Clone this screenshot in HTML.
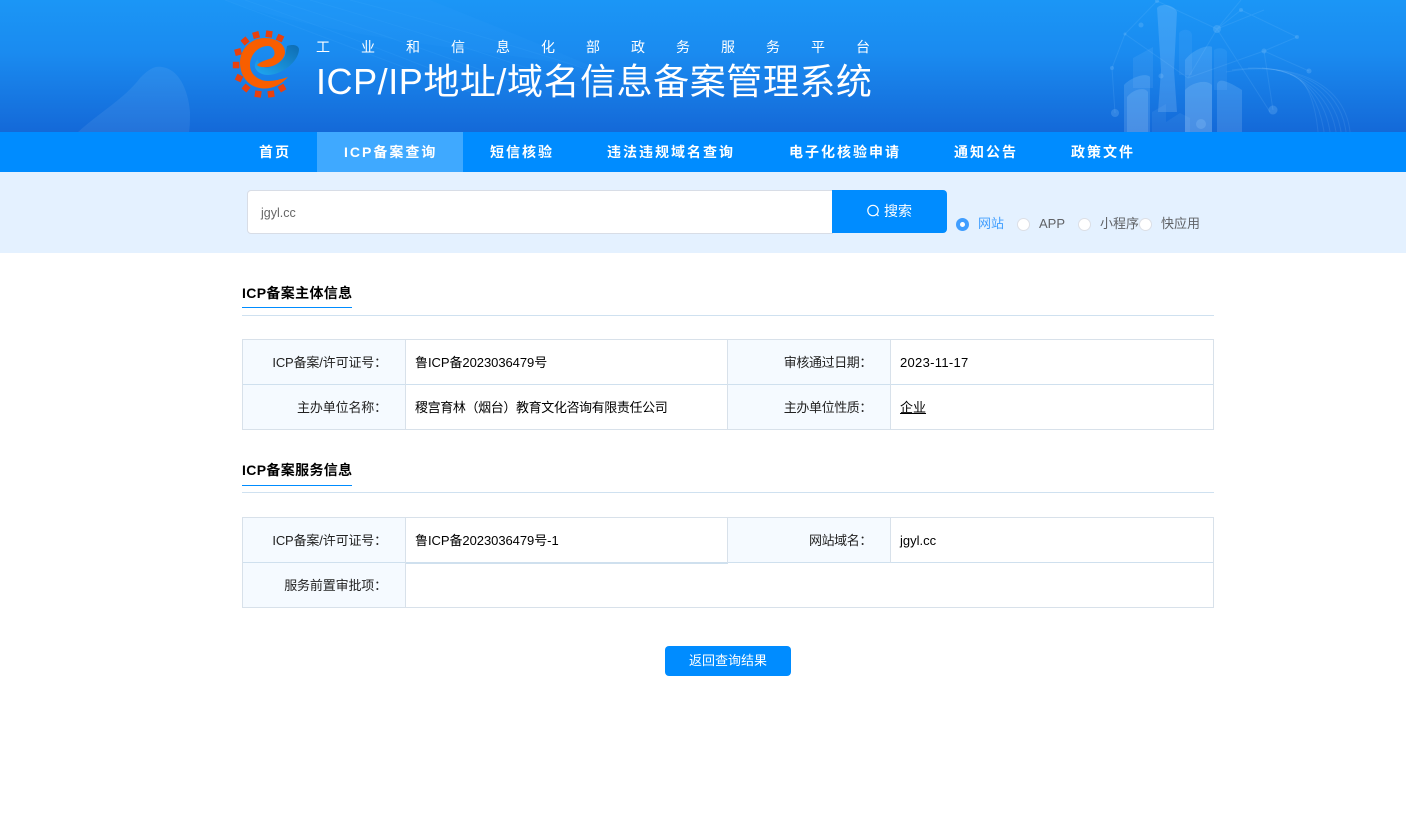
<!DOCTYPE html>
<html lang="zh-CN">
<head>
<meta charset="utf-8">
<title>ICP/IP地址/域名信息备案管理系统</title>
<style>
html,body{margin:0;padding:0;background:#fff;width:1406px;height:838px;overflow:hidden}
body{position:relative;font-family:"Liberation Sans","Noto Sans CJK SC",sans-serif;font-size:13px;color:#000}
.a{position:absolute;white-space:nowrap}
#hd{position:absolute;left:0;top:0;width:1406px;height:132px;background:linear-gradient(180deg,#1b96f6 0%,#1a8bf0 40%,#1469d8 100%);overflow:hidden}
#nav{position:absolute;left:0;top:132px;width:1406px;height:40px;background:#008cff}
#nav span{position:absolute;top:0;line-height:40px;color:#fff;font-weight:700;font-size:14px;letter-spacing:2px;white-space:nowrap}
#act{position:absolute;left:317px;top:0;width:146px;height:40px;background:#3fa9ff}
#sb{position:absolute;left:0;top:172px;width:1406px;height:81px;background:#e4f1ff}
.r{position:absolute;top:218px;width:11px;height:11px;border:1px solid #dcdfe6;border-radius:50%;background:#fff}
.rl{position:absolute;top:214px;line-height:20px;font-size:13px;color:#606266;white-space:nowrap}
.l{position:absolute;background:#d8e1ea}
.th{position:absolute;background:#f5faff}
.c{position:absolute;line-height:20px;font-size:13px;color:#000;white-space:nowrap}
.k{text-align:right;width:144px;color:#222;letter-spacing:-.15px}
.st{position:absolute;left:242px;width:110px;font-size:14px;font-weight:700;line-height:20px;color:#000;white-space:nowrap;letter-spacing:.35px}
</style>
</head>
<body>
<div id="hd">
<svg width="1406" height="132" viewBox="0 0 1406 132" style="position:absolute;left:0;top:0">
<path d="M78 132C100 112 125 98 140 78C150 68 155 66 162 67C178 69 188 88 190 112C190 120 190 126 189 132Z" fill="#fff" fill-opacity=".07"/>
<g fill="none" stroke="#4fb4ff" stroke-opacity=".14">
<path d="M225 0C300 28 380 58 470 92"/><path d="M245 0C320 26 400 56 500 96"/><path d="M275 0C350 24 430 50 540 92"/><path d="M310 0C380 20 470 48 580 86"/><path d="M350 0C420 18 510 44 620 80"/>
</g>
<path d="M225 0L430 0C480 20 540 44 600 70C500 50 330 40 225 0Z" fill="#38a9ff" fill-opacity=".1"/>
<g stroke="#8fcbff" stroke-opacity=".14" fill="none">
<path d="M1157 1L1125 34L1112 68L1115 113M1157 1L1217 29L1264 10M1217 29L1241 10M1217 29L1270 112M1241 10L1297 37L1264 51L1309 71M1125 34L1188 78L1264 51M1217 29L1188 78M1217 29L1241 0M1264 51L1273 110"/>
</g>
<g fill="#a6d6ff" fill-opacity=".2">
<circle cx="1141" cy="25" r="2.500"/><circle cx="1125" cy="34" r="1.500"/><circle cx="1112" cy="68" r="2"/><circle cx="1115" cy="113" r="4"/><circle cx="1217" cy="29" r="4"/><circle cx="1241" cy="10" r="2"/><circle cx="1297" cy="37" r="2"/><circle cx="1264" cy="51" r="2.500"/><circle cx="1309" cy="71" r="2.500"/><circle cx="1273" cy="110" r="4.500"/><circle cx="1201" cy="124" r="5"/><circle cx="1161" cy="76" r="2.500"/><circle cx="1157" cy="1" r="2"/>
</g>
<g fill="#b8dcff" fill-opacity=".18">
<path d="M1157 8C1160 3 1174 4 1177 12L1174 70L1177 112L1158 112L1161 70Z" fill-opacity=".2"/>
<path d="M1179 33C1183 28 1191 29 1192 35L1192 75L1179 75Z" fill-opacity=".08"/>
<path d="M1133 58L1153 47L1153 88L1133 88Z" fill-opacity=".09"/>
<path d="M1124 85C1130 78 1146 72 1150 77L1150 132L1124 132Z"/>
<path d="M1127 97C1132 90 1144 86 1148 92L1148 132L1127 132Z"/>
<path d="M1185 60C1192 50 1208 44 1212 47L1212 132L1185 132Z"/>
<path d="M1185 90C1190 84 1205 78 1212 85L1212 132L1185 132Z"/>
<path d="M1214 50C1218 47 1226 48 1227 52L1227 90L1214 90Z" fill-opacity=".08"/>
<path d="M1217 84C1219 78 1226 80 1242 90L1242 132L1217 132Z"/>
<path d="M1152 112L1166 104L1166 132L1152 132Z" fill-opacity=".08"/>
<path d="M1166 122L1180 113L1190 118L1190 132L1166 132Z" fill-opacity=".08"/>
</g>
<g fill="none" stroke="#a6d6ff" stroke-opacity=".12">
<path d="M1226 72C1290 60 1345 82 1350 132"/><path d="M1232 70C1292 62 1340 84 1346 132"/><path d="M1248 68C1296 66 1335 90 1341 132"/><path d="M1262 68C1298 70 1330 94 1336 132"/><path d="M1276 70C1302 74 1325 98 1330 132"/><path d="M1290 74C1306 80 1320 104 1324 132"/><path d="M1300 80C1310 88 1316 110 1318 132"/>
</g>
<!-- logo -->
<defs>
<linearGradient id="b" x1="0" y1="1" x2="1" y2="0"><stop offset="0" stop-color="#1fa8f2"/><stop offset="1" stop-color="#0e6cb2"/></linearGradient>
</defs>
<g fill="#e8400e">
<rect x="241.800" y="37.800" width="6.500" height="6.500" transform="rotate(-40 245 41)"/>
<rect x="252.800" y="31.800" width="6.500" height="6.500" transform="rotate(-15 256 35)"/>
<rect x="265.800" y="30.800" width="6.500" height="6.500" transform="rotate(8 269 34)"/>
<rect x="276.800" y="34.800" width="6.500" height="6.500" transform="rotate(25 280 38)"/>
<rect x="234.800" y="48.800" width="6.500" height="6.500" transform="rotate(-15 238 52)"/>
<rect x="232.800" y="61.800" width="6.500" height="6.500"/>
<rect x="235.800" y="74.800" width="6.500" height="6.500" transform="rotate(25 239 78)"/>
<rect x="242.800" y="84.800" width="6.500" height="6.500" transform="rotate(40 246 88)"/>
<rect x="254.800" y="90.800" width="6.500" height="6.500" transform="rotate(8 258 94)"/>
<rect x="267.800" y="90.800" width="6.500" height="6.500" transform="rotate(-8 271 94)"/>
<rect x="278.800" y="84.800" width="6.500" height="6.500" transform="rotate(-30 282 88)"/>
</g>
<path d="M287 46C293 44 298 45 299 49C299 58 290 67 282 71C275 75 267 76 262 74C257 72 254 68 255 64C256 61 257 60 258 59C258 63 261 67 267 68C273 68 281 63 285 56Z" fill="url(#b)"/>
<path d="M288 77C281 85 272 89 263 88.500C250 88 240 77 240 63C240 49 251 38 265 38C276 38 285 44 285 52C285 59 277 66 268 67C263 67.500 259 67 257 65C261 61 267 60 272 58C277 55 274 46 268 46C258 46 250 55 250 65C250 74 258 81 268 81C275 81 282 79 288 77Z" fill="#f85e00"/>
</svg>
<div class="a" style="left:316px;top:38px;line-height:18px;font-size:14px;letter-spacing:31px;color:#fff">工业和信息化部政务服务平台</div>
<div class="a" style="left:316px;top:58px;line-height:48px;font-size:36px;color:#fff;letter-spacing:.55px">ICP/IP地址/域名信息备案管理系统</div>
</div>

<div id="nav">
<div id="act"></div>
<span style="left:259px">首页</span>
<span style="left:344px">ICP备案查询</span>
<span style="left:490px">短信核验</span>
<span style="left:607px">违法违规域名查询</span>
<span style="left:789px">电子化核验申请</span>
<span style="left:954px">通知公告</span>
<span style="left:1071px">政策文件</span>
</div>

<div id="sb"></div>
<div style="position:absolute;left:247px;top:190px;width:584px;height:42px;background:#fff;border:1px solid #d8dde6;border-radius:4px 0 0 4px"></div>
<div class="a" style="left:261px;top:203px;line-height:20px;font-size:12.500px;color:#666">jgyl.cc</div>
<div style="position:absolute;left:832px;top:190px;width:115px;height:43px;background:#008cff;border-radius:0 4px 4px 0"></div>
<svg width="16" height="16" viewBox="0 0 16 16" style="position:absolute;left:865px;top:203px"><circle cx="8" cy="7.500" r="5.200" fill="none" stroke="#fff" stroke-width="1.200"/><path d="M11.800 11.300L13.500 13" stroke="#fff" stroke-width="1.200" fill="none"/></svg>
<div class="a" style="left:884px;top:201px;line-height:20px;font-size:14px;color:#fff">搜索</div>

<div class="r" style="left:956px;background:#409eff;border-color:#409eff"></div>
<div style="position:absolute;left:960px;top:222px;width:5px;height:5px;border-radius:50%;background:#fff"></div>
<div class="rl" style="left:978px;color:#409eff">网站</div>
<div class="r" style="left:1017px"></div>
<div class="rl" style="left:1039px">APP</div>
<div class="r" style="left:1078px"></div>
<div class="rl" style="left:1100px">小程序</div>
<div class="r" style="left:1139px"></div>
<div class="rl" style="left:1161px">快应用</div>

<div class="st" style="top:283px">ICP备案主体信息</div>
<div class="a" style="left:242px;top:307px;width:110px;height:1px;background:#008cff"></div>
<div class="a" style="left:242px;top:315px;width:972px;height:1px;background:#cfe1f0"></div>

<div class="th" style="left:243px;top:340px;width:162px;height:89px"></div>
<div class="th" style="left:728px;top:340px;width:162px;height:89px"></div>
<div class="l" style="left:242px;top:339px;width:972px;height:1px"></div>
<div class="l" style="left:242px;top:384px;width:972px;height:1px;background:#cfe0ee"></div>
<div class="l" style="left:242px;top:429px;width:972px;height:1px"></div>
<div class="l" style="left:242px;top:339px;width:1px;height:91px"></div>
<div class="l" style="left:405px;top:339px;width:1px;height:91px"></div>
<div class="l" style="left:727px;top:339px;width:1px;height:91px"></div>
<div class="l" style="left:890px;top:339px;width:1px;height:91px"></div>
<div class="l" style="left:1213px;top:339px;width:1px;height:91px"></div>
<div class="c k" style="left:243px;top:353px">ICP备案/许可证号：</div>
<div class="c" style="left:415px;top:353px;letter-spacing:-.05px">鲁ICP备2023036479号</div>
<div class="c k" style="left:728px;top:353px;letter-spacing:-.4px">审核通过日期：</div>
<div class="c" style="left:900px;top:353px;letter-spacing:.3px">2023-11-17</div>
<div class="c k" style="left:243px;top:398px">主办单位名称：</div>
<div class="c" style="left:415px;top:398px;letter-spacing:-.38px">稷宫育林（烟台）教育文化咨询有限责任公司</div>
<div class="c k" style="left:728px;top:398px;letter-spacing:-.4px">主办单位性质：</div>
<div class="c" style="left:900px;top:398px;text-decoration:underline">企业</div>

<div class="st" style="top:460px">ICP备案服务信息</div>
<div class="a" style="left:242px;top:485px;width:110px;height:1px;background:#008cff"></div>
<div class="a" style="left:242px;top:492px;width:972px;height:1px;background:#cfe1f0"></div>

<div class="th" style="left:243px;top:518px;width:162px;height:89px"></div>
<div class="th" style="left:728px;top:518px;width:162px;height:44px"></div>
<div class="l" style="left:242px;top:517px;width:972px;height:1px"></div>
<div class="l" style="left:242px;top:562px;width:972px;height:1px;background:#cfe0ee"></div>
<div class="l" style="left:405px;top:563px;width:323px;height:1px;background:#cfe0ee"></div>
<div class="l" style="left:242px;top:607px;width:972px;height:1px"></div>
<div class="l" style="left:242px;top:517px;width:1px;height:91px"></div>
<div class="l" style="left:405px;top:517px;width:1px;height:91px"></div>
<div class="l" style="left:727px;top:517px;width:1px;height:46px"></div>
<div class="l" style="left:890px;top:517px;width:1px;height:46px"></div>
<div class="l" style="left:1213px;top:517px;width:1px;height:91px"></div>
<div class="c k" style="left:243px;top:531px">ICP备案/许可证号：</div>
<div class="c" style="left:415px;top:531px;letter-spacing:-.05px">鲁ICP备2023036479号-1</div>
<div class="c k" style="left:728px;top:531px;letter-spacing:-.4px">网站域名：</div>
<div class="c" style="left:900px;top:531px">jgyl.cc</div>
<div class="c k" style="left:243px;top:576px">服务前置审批项：</div>

<div style="position:absolute;left:665px;top:646px;width:126px;height:30px;line-height:30px;background:#008cff;border-radius:4px;color:#fff;font-size:13px;text-align:center">返回查询结果</div>
</body>
</html>
